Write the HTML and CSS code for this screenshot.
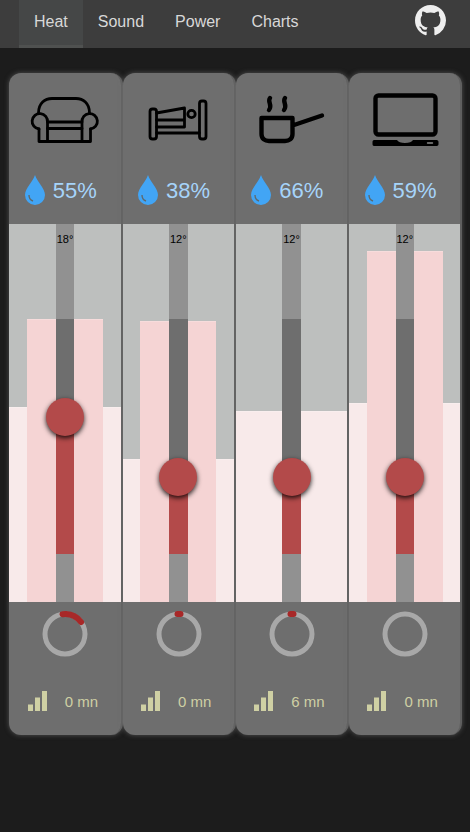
FILE: index.html
```html
<!DOCTYPE html>
<html lang="en">
<head>
  <meta charset="UTF-8">
  <meta name="viewport" content="width=device-width, initial-scale=1.0">
  <title>Heat</title>
  <link rel="stylesheet" href="styles.css">
</head>
<body>
  <nav class="navbar">
    <ul class="tabs">
      <li class="tab active">Heat</li>
      <li class="tab">Sound</li>
      <li class="tab">Power</li>
      <li class="tab">Charts</li>
    </ul>
    <svg class="github" viewBox="0 0 16 16"><path d="M8 0C3.58 0 0 3.58 0 8c0 3.54 2.29 6.53 5.47 7.59.4.07.55-.17.55-.38 0-.19-.01-.82-.01-1.49-2.01.37-2.53-.49-2.69-.94-.09-.23-.48-.94-.82-1.13-.28-.15-.68-.52-.01-.53.63-.01 1.08.58 1.23.82.72 1.21 1.87.87 2.33.66.07-.52.28-.87.51-1.07-1.78-.2-3.64-.89-3.64-3.95 0-.87.31-1.59.82-2.15-.08-.2-.36-1.02.08-2.12 0 0 .67-.21 2.2.82.64-.18 1.32-.27 2-.27.68 0 1.36.09 2 .27 1.53-1.04 2.2-.82 2.2-.82.44 1.1.16 1.92.08 2.12.51.56.82 1.27.82 2.15 0 3.07-1.87 3.75-3.65 3.95.29.25.54.73.54 1.48 0 1.07-.01 1.93-.01 2.2 0 .21.15.46.55.38A8.013 8.013 0 0016 8c0-4.42-3.58-8-8-8z"/></svg>
  </nav>

  <main class="rooms">
    <!-- living room -->
    <section class="room">
      <div class="room-head">
        <svg class="room-icon" viewBox="0 0 80 60">
          <path d="M13.5 20C13.5 10 20 5.5 27 5.5H51C58 5.5 64.5 10 64.5 20"/>
          <path d="M14 36A7.7 7.7 0 1 1 22.5 29V48.5M57 48.5V29A7.7 7.7 0 1 1 65.5 36"/>
          <path d="M14 36V48.5H65.5V36M22.5 29H57M22.5 35.5H57"/>
        </svg>
        <div class="humidity">
          <svg class="drop" viewBox="0 0 20 30"><path class="drop-fill" d="M10 0C12 7 20 13 20 20A10 10 0 0 1 0 20C0 13 8 7 10 0Z"/><path class="drop-shine" d="M4 20C4 23 5 25 8 26"/></svg>
          <span>55%</span>
        </div>
      </div>
      <div class="chart">
        <div class="band pale" style="height: 195px"></div>
        <div class="band pink" style="height: 283px"></div>
        <div class="track">
          <span class="target">18°</span>
          <div class="track-range" style="top: 95px; height: 235px">
            <div class="track-fill" style="height: 136px"></div>
          </div>
        </div>
        <div class="thumb" style="top: 174px"></div>
      </div>
      <div class="room-foot">
        <svg class="ring" viewBox="0 0 46 46"><circle cx="23" cy="23" r="20"/><path d="M20.5 3.2A20 20 0 0 1 39 11"/></svg>
        <div class="usage">
          <svg class="bars" viewBox="0 0 20 20"><path d="M0 13.5H5V20H0ZM7 6.5H12V20H7ZM14 0H19V20H14Z"/></svg>
          <span>0 mn</span>
        </div>
      </div>
    </section>

    <!-- bedroom -->
    <section class="room">
      <div class="room-head">
        <svg class="room-icon" viewBox="0 0 80 60">
          <rect x="12" y="16" width="6.5" height="30" rx="2.5"/>
          <rect x="61.5" y="8" width="6.5" height="38" rx="2.5"/>
          <path d="M18.5 20L46.5 15V34H18.5M18.5 27H46.5M18.5 40H61.5"/>
          <circle cx="53.5" cy="21" r="3.7"/>
        </svg>
        <div class="humidity">
          <svg class="drop" viewBox="0 0 20 30"><path class="drop-fill" d="M10 0C12 7 20 13 20 20A10 10 0 0 1 0 20C0 13 8 7 10 0Z"/><path class="drop-shine" d="M4 20C4 23 5 25 8 26"/></svg>
          <span>38%</span>
        </div>
      </div>
      <div class="chart">
        <div class="band pale" style="height: 143px"></div>
        <div class="band pink" style="height: 281px"></div>
        <div class="track">
          <span class="target">12°</span>
          <div class="track-range" style="top: 95px; height: 235px">
            <div class="track-fill" style="height: 78px"></div>
          </div>
        </div>
        <div class="thumb" style="top: 234px"></div>
      </div>
      <div class="room-foot">
        <svg class="ring" viewBox="0 0 46 46"><circle cx="23" cy="23" r="20"/><path d="M21.5 3H24.5"/></svg>
        <div class="usage">
          <svg class="bars" viewBox="0 0 20 20"><path d="M0 13.5H5V20H0ZM7 6.5H12V20H7ZM14 0H19V20H14Z"/></svg>
          <span>0 mn</span>
        </div>
      </div>
    </section>

    <!-- kitchen -->
    <section class="room">
      <div class="room-head">
        <svg class="room-icon" viewBox="0 0 80 60">
          <path class="bold" d="M10.5 25V41C10.5 46 14 48 18 48H34C38 48 41.5 46 41.5 41V25H10.5ZM43 32L71 22.5"/>
          <path class="bold" d="M19 5C16 9 22 12 18 17M34 5C31 9 37 12 33 17"/>
        </svg>
        <div class="humidity">
          <svg class="drop" viewBox="0 0 20 30"><path class="drop-fill" d="M10 0C12 7 20 13 20 20A10 10 0 0 1 0 20C0 13 8 7 10 0Z"/><path class="drop-shine" d="M4 20C4 23 5 25 8 26"/></svg>
          <span>66%</span>
        </div>
      </div>
      <div class="chart">
        <div class="band pale" style="height: 191px"></div>
        <div class="track">
          <span class="target">12°</span>
          <div class="track-range" style="top: 95px; height: 235px">
            <div class="track-fill" style="height: 78px"></div>
          </div>
        </div>
        <div class="thumb" style="top: 234px"></div>
      </div>
      <div class="room-foot">
        <svg class="ring" viewBox="0 0 46 46"><circle cx="23" cy="23" r="20"/><path d="M21.5 3H24.5"/></svg>
        <div class="usage">
          <svg class="bars" viewBox="0 0 20 20"><path d="M0 13.5H5V20H0ZM7 6.5H12V20H7ZM14 0H19V20H14Z"/></svg>
          <span>6 mn</span>
        </div>
      </div>
    </section>

    <!-- office -->
    <section class="room">
      <div class="room-head">
        <svg class="room-icon" viewBox="0 0 80 60">
          <rect class="bold" x="10.5" y="2.5" width="60" height="39" rx="3"/>
          <path class="solid" d="M9 47H32C33 49 36 50 40 50C44 50 47 49 48 47H71.5C73 47 73.5 48 73.5 49V51C73.5 52 73 53 71.5 53H9C8 53 7.5 52 7.5 51V49C7.5 48 8 47 9 47Z"/>
          <path class="slot" d="M62.5 50H67.5"/>
        </svg>
        <div class="humidity">
          <svg class="drop" viewBox="0 0 20 30"><path class="drop-fill" d="M10 0C12 7 20 13 20 20A10 10 0 0 1 0 20C0 13 8 7 10 0Z"/><path class="drop-shine" d="M4 20C4 23 5 25 8 26"/></svg>
          <span>59%</span>
        </div>
      </div>
      <div class="chart">
        <div class="band pale" style="height: 199px"></div>
        <div class="band pink" style="height: 351px"></div>
        <div class="track">
          <span class="target">12°</span>
          <div class="track-range" style="top: 95px; height: 235px">
            <div class="track-fill" style="height: 78px"></div>
          </div>
        </div>
        <div class="thumb" style="top: 234px"></div>
      </div>
      <div class="room-foot">
        <svg class="ring" viewBox="0 0 46 46"><circle cx="23" cy="23" r="20"/></svg>
        <div class="usage">
          <svg class="bars" viewBox="0 0 20 20"><path d="M0 13.5H5V20H0ZM7 6.5H12V20H7ZM14 0H19V20H14Z"/></svg>
          <span>0 mn</span>
        </div>
      </div>
    </section>
  </main>
</body>
</html>
```

FILE: styles.css
```css
body {
  font-family: "Liberation Sans", Arial, sans-serif;
  margin: 0;
  padding: 0;
  height: 832px;
  overflow: hidden;
  background: #1c1c1c;
}
.navbar {
  height: 48px;
  display: flex;
  justify-content: space-between;
  background: #3d3d3d;
  padding: 0 24px 0 19px;
}
.tabs {
  display: flex;
  list-style: none;
  margin: 0;
  padding: 0;
}
.tab {
  height: 48px;
  box-sizing: border-box;
  padding: 13px 15px 0;
  font-size: 16px;
  color: #d8d8d8;
  margin-right: 1px;
}
.tab.active {
  background: #454747;
  border-bottom: 3px solid #4f5150;
  margin-right: 0;
}
.github {
  width: 31px;
  height: 31px;
  margin-top: 5px;
  fill: #eeeeee;
}
.rooms {
  display: flex;
  padding: 25px 0 0 9.25px;
}
.room {
  width: 113.25px;
  height: 662px;
  box-sizing: border-box;
  background: #6e6e6e;
  border-right: 2px solid #5f5f5f;
  border-radius: 12px;
  box-shadow: 0 0 5px rgba(120, 120, 120, 0.6);
  overflow: hidden;
}
.room-head {
  height: 151px;
  display: flex;
  flex-direction: column;
  align-items: center;
  padding-top: 20px;
  box-sizing: border-box;
}
.room-icon {
  width: 80px;
  height: 60px;
  flex-shrink: 0;
  fill: none;
  stroke: #000;
  stroke-width: 2.8;
  stroke-linecap: round;
  stroke-linejoin: round;
}
.room-icon .bold {
  stroke-width: 4.4;
}
.room-icon .solid {
  fill: #000;
  stroke: none;
}
.room-icon .slot {
  stroke: #8a8a8a;
  stroke-width: 1.4;
}
.humidity {
  display: flex;
  align-items: center;
  gap: 8px;
  margin-top: 23px;
  margin-left: -8px;
  font-size: 22px;
  color: #a6d4fa;
}
.drop {
  width: 20px;
  height: 30px;
  margin-top: -1px;
  margin-bottom: 1px;
}
.drop-fill {
  fill: #42a5f5;
}
.drop-shine {
  fill: none;
  stroke: #5d6a70;
  stroke-width: 1.4;
}
.chart {
  position: relative;
  height: 378px;
  background: #bdbfbe;
}
.band {
  position: absolute;
  bottom: 0;
  border-top: 1px solid rgba(255, 255, 255, 0.2);
  box-sizing: border-box;
}
.pale {
  left: 0;
  right: 0;
  background: #f8eaea;
}
.pink {
  left: 17.75px;
  right: 17.5px;
  background: #f5d4d4;
}
.track {
  position: absolute;
  top: 0;
  bottom: 0;
  left: 46.5px;
  width: 18.6px;
  background: #919191;
}
.target {
  display: block;
  margin: 9px -5px 0;
  text-align: center;
  font-size: 11px;
  color: #000;
}
.track-range {
  position: absolute;
  left: 0;
  right: 0;
  display: flex;
  align-items: flex-end;
  background: #6e6e6e;
}
.track-fill {
  width: 100%;
  background: #b34a4a;
}
.thumb {
  position: absolute;
  left: 36.75px;
  width: 38px;
  height: 38px;
  border-radius: 50%;
  background: #b34a4a;
  box-shadow: 0 2px 5px rgba(0, 0, 0, 0.85);
}
.room-foot {
  display: flex;
  flex-direction: column;
  align-items: center;
  padding-top: 9px;
}
.ring {
  width: 46px;
  height: 46px;
  margin-left: 1px;
  fill: none;
  stroke: #a8a8a8;
  stroke-width: 5;
}
.ring path {
  stroke: #a82828;
  stroke-width: 6;
  stroke-linecap: round;
}
.usage {
  display: flex;
  align-items: center;
  gap: 17px;
  margin-top: 34px;
  margin-right: 4px;
  font-size: 15px;
  color: #cfd0a4;
}
.bars {
  width: 20px;
  height: 20px;
  fill: #cfd0a4;
}
```
